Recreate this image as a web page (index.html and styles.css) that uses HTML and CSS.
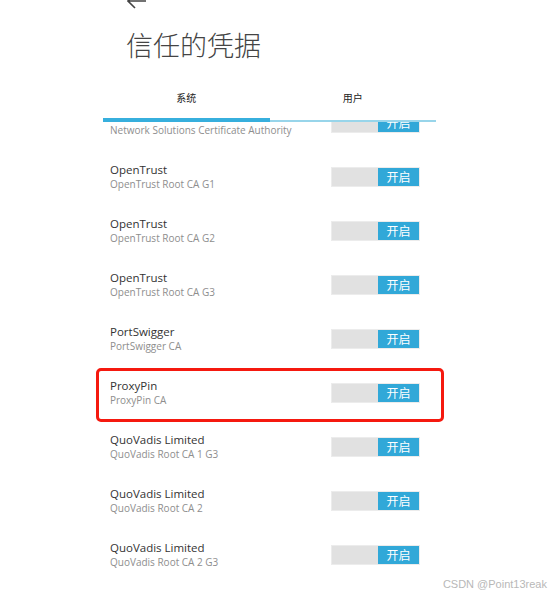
FILE: index.html
```html
<!DOCTYPE html>
<html lang="zh">
<head>
<meta charset="utf-8">
<link rel="stylesheet" href="styles.css">
</head>
<body>
<div class="page">
  <div class="back">
    <svg width="20" height="16" viewBox="0 0 20 16"><path d="M19 8H2M8 1L1 8l7 7" fill="none" stroke="#444" stroke-width="1.6"/></svg>
  </div>
  <h1 class="title">信任的凭据</h1>
  <div class="tabs">
    <div class="tab active">系统</div>
    <div class="tab">用户</div>
  </div>
  <div class="list">
    <div class="list-inner">
      <div class="row"><div class="text"><div class="name">Network Solutions L.L.C.</div><div class="sub">Network Solutions Certificate Authority</div></div><div class="toggle"><span class="knob">开启</span></div></div>
      <div class="row"><div class="text"><div class="name">OpenTrust</div><div class="sub">OpenTrust Root CA G1</div></div><div class="toggle"><span class="knob">开启</span></div></div>
      <div class="row"><div class="text"><div class="name">OpenTrust</div><div class="sub">OpenTrust Root CA G2</div></div><div class="toggle"><span class="knob">开启</span></div></div>
      <div class="row"><div class="text"><div class="name">OpenTrust</div><div class="sub">OpenTrust Root CA G3</div></div><div class="toggle"><span class="knob">开启</span></div></div>
      <div class="row"><div class="text"><div class="name">PortSwigger</div><div class="sub">PortSwigger CA</div></div><div class="toggle"><span class="knob">开启</span></div></div>
      <div class="row highlight"><div class="text"><div class="name">ProxyPin</div><div class="sub">ProxyPin CA</div></div><div class="toggle"><span class="knob">开启</span></div></div>
      <div class="row"><div class="text"><div class="name">QuoVadis Limited</div><div class="sub">QuoVadis Root CA 1 G3</div></div><div class="toggle"><span class="knob">开启</span></div></div>
      <div class="row"><div class="text"><div class="name">QuoVadis Limited</div><div class="sub">QuoVadis Root CA 2</div></div><div class="toggle"><span class="knob">开启</span></div></div>
      <div class="row"><div class="text"><div class="name">QuoVadis Limited</div><div class="sub">QuoVadis Root CA 2 G3</div></div><div class="toggle"><span class="knob">开启</span></div></div>
    </div>
  </div>
  <div class="watermark">CSDN @Point13reak</div>
</div>
</body>
</html>
```

FILE: styles.css
```css
html, body {
  margin: 0;
  padding: 0;
  background: #fff;
}
body {
  font-family: "Open Sans", "Noto Sans CJK SC", sans-serif;
  color: #333;
}
.page {
  position: relative;
  width: 551px;
  height: 595px;
  overflow: hidden;
}
.back {
  display: flow-root;
  height: 0;
  margin-left: 127px;
  overflow: visible;
}
.back svg {
  display: block;
  margin-top: -7px;
}
.title {
  margin: 29px 0 0 126px;
  font-family: "Noto Sans CJK SC", sans-serif;
  font-weight: 300;
  font-size: 27px;
  line-height: 32px;
  color: #444;
}
.tabs {
  position: relative;
  z-index: 1;
  display: flex;
  width: 333px;
  margin: 25px 0 0 103px;
  border-bottom: 2px solid #98d5ea;
}
.tab {
  flex: 1;
  text-align: center;
  font-family: "Noto Sans CJK SC", sans-serif;
  font-size: 10px;
  line-height: 14px;
  padding: 5px 0 15px;
  color: #222;
}
.tab.active {
  box-shadow: inset 0 -4px 0 #37afdd;
  margin-bottom: -2px;
  padding-bottom: 17px;
}
.list {
  width: 349px;
  margin-left: 95px;
  padding: 0 8px;
  box-sizing: border-box;
  height: 473px;
  overflow: hidden;
}
.list-inner {
  margin-top: -26px;
}
.row {
  position: relative;
  height: 54px;
  display: flex;
  align-items: center;
  padding: 0 16px 0 7px;
}
.text {
  flex: 1;
}
.name {
  font-size: 11.5px;
  line-height: 14px;
  color: #333;
}
.sub {
  font-size: 10px;
  line-height: 14px;
  color: #8e8e8e;
}
.toggle {
  width: 87px;
  height: 18px;
  background: #e1e1e1;
  border: 1px solid #ececec;
  display: flex;
  justify-content: flex-end;
}
.knob {
  width: 41px;
  height: 18px;
  background: #31a8d8;
  color: #fff;
  font-family: "Noto Sans CJK SC", sans-serif;
  font-size: 12px;
  line-height: 18px;
  text-align: center;
}
.highlight::after {
  content: "";
  position: absolute;
  left: -7px;
  right: -8px;
  top: 2px;
  bottom: -2px;
  border: 3px solid #f5190f;
  border-radius: 5px;
}
.watermark {
  position: absolute;
  right: 4px;
  bottom: 5px;
  font-family: "Liberation Sans", sans-serif;
  font-size: 11px;
  color: #b8b8b8;
}
```
